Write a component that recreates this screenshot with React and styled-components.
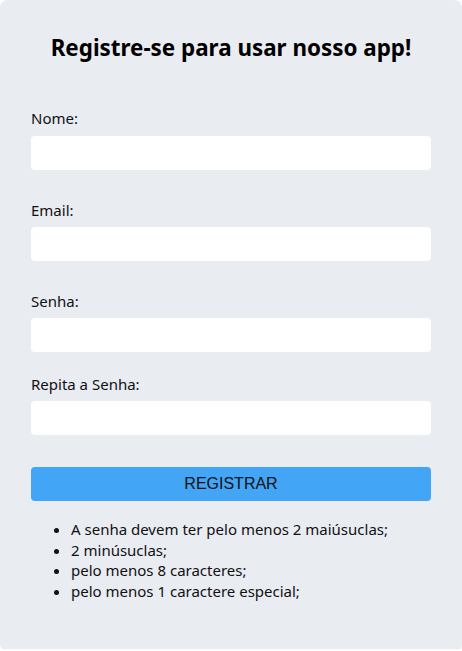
import React from 'react';
import styled, { createGlobalStyle } from 'styled-components';

const GlobalStyle = createGlobalStyle`
	* {
		box-sizing: border-box;
	}
	body {
		margin: 0;
		background: #fff;
		font-family: 'Noto Sans', 'Open Sans', sans-serif;
	}
`;

const Card = styled.main`
	width: 462px;
	background: #e9ecf1;
	border-radius: 8px;
	padding: 34px 31px 48px;
	box-shadow: 0 2px 3px rgba(0, 0, 0, 0.12);
	color: #111;
`;

const Title = styled.h1`
	margin: 0 0 46px;
	text-align: center;
	font-size: 22.4px;
	line-height: 28px;
	font-weight: 700;
	color: #000;
`;

const Field = styled.div`
	display: flex;
	flex-direction: column;
	gap: ${(p) => p.gap || 7}px;
	margin-bottom: ${(p) => p.after}px;
`;

const Label = styled.label`
	font-size: 15px;
	line-height: 20px;
`;

const Input = styled.input`
	width: 100%;
	height: 34px;
	border: none;
	border-radius: 4px;
	background: #fff;
	outline: none;
	padding: 0 10px;
	font-size: 15px;
`;

const Button = styled.button`
	width: 100%;
	height: 34px;
	border: none;
	border-radius: 4px;
	background: #42a5f5;
	color: #111;
	font-family: 'Liberation Sans', Arial, sans-serif;
	font-size: 16px;
	cursor: pointer;
`;

const Rules = styled.ul`
	margin: 18px 0 0;
	padding-left: 40px;
	font-size: 15px;
	line-height: 20.5px;
`;

const fields = [
	{ label: 'Nome:', type: 'text', after: 30, gap: 8 },
	{ label: 'Email:', type: 'email', after: 30 },
	{ label: 'Senha:', type: 'password', after: 22 },
	{ label: 'Repita a Senha:', type: 'password', after: 32 },
];

const rules = [
	'A senha devem ter pelo menos 2 maiúsuclas;',
	'2 minúsuclas;',
	'pelo menos 8 caracteres;',
	'pelo menos 1 caractere especial;',
];

export default function App() {
	return (
		<>
			<GlobalStyle />
			<Card>
				<Title>Registre-se para usar nosso app!</Title>
				<form onSubmit={(e) => e.preventDefault()}>
					{fields.map((f) => (
						<Field key={f.label} after={f.after} gap={f.gap}>
							<Label>{f.label}</Label>
							<Input type={f.type} />
						</Field>
					))}
					<Button>REGISTRAR</Button>
				</form>
				<Rules>
					{rules.map((r) => (
						<li key={r}>{r}</li>
					))}
				</Rules>
			</Card>
		</>
	);
}
